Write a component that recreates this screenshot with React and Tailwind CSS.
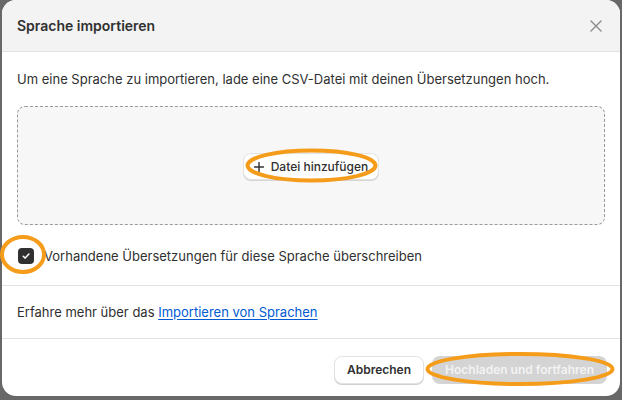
import React from "react";

export default function App() {
  return (
    <div
      className="relative w-[622px] h-[400px] bg-[#686868] overflow-hidden"
      style={{ fontFamily: "Inter, 'Noto Sans', sans-serif" }}
    >
      <div className="ml-[2px] w-[618px] h-[396px] bg-white rounded-[14px] overflow-hidden flex flex-col text-[#303030]">
        {/* Header */}
        <div className="h-[52px] shrink-0 bg-[#f3f3f3] border-b border-[#e3e3e3] flex items-center justify-between pl-[15px] pr-[18px]">
          <div className="text-[14px] font-semibold leading-5">Sprache importieren</div>
          <svg width="12" height="12" viewBox="0 0 12 12" className="text-[#8a8a8a]">
            <path d="M1 1L11 11M11 1L1 11" stroke="currentColor" strokeWidth="1.4" strokeLinecap="round" />
          </svg>
        </div>

        {/* Body */}
        <div className="px-[15px] pt-[17px] pb-[19px] border-b border-[#e3e3e3]">
          <p className="text-[13px] leading-5">
            Um eine Sprache zu importieren, lade eine CSV-Datei mit deinen Übersetzungen hoch.
          </p>
          <div className="mt-[17px] h-[119px] rounded-lg border border-dashed border-[#9a9a9a] bg-[#f7f7f7] flex items-center justify-center">
            <button className="mt-[2px] h-[27px] px-[10px] flex items-center gap-[7px] rounded-lg bg-white border border-[#e3e3e3] shadow-[0_1px_0_#d4d4d4] text-[12px] font-medium text-[#303030]">
              <svg width="10" height="10" viewBox="0 0 10 10">
                <path d="M5 0.5V9.5M0.5 5H9.5" stroke="#303030" strokeWidth="1.4" strokeLinecap="round" />
              </svg>
              Datei hinzufügen
            </button>
          </div>
          <div className="mt-[21px] flex items-center gap-[10px] h-5">
            <div className="ml-[1px] w-4 h-4 rounded-[4px] bg-[#303030] flex items-center justify-center">
              <svg width="10" height="10" viewBox="0 0 10 10">
                <path d="M2.2 5.2L4.2 7.1L7.9 3" stroke="white" strokeWidth="1.5" fill="none" strokeLinecap="round" strokeLinejoin="round" />
              </svg>
            </div>
            <span className="text-[13px] leading-5">
              Vorhandene Übersetzungen für diese Sprache überschreiben
            </span>
          </div>
        </div>

        {/* Learn more */}
        <div className="px-[15px] py-4 border-b border-[#e3e3e3] text-[13px] leading-5">
          Erfahre mehr über das{" "}
          <a className="text-[#005bd3] underline underline-offset-2">Importieren von Sprachen</a>
        </div>

        {/* Footer */}
        <div className="flex-1 flex items-start justify-end gap-[8px] pt-[17px] pr-[13px]">
          <button className="h-[28px] px-[12px] rounded-lg bg-white border border-[#e3e3e3] shadow-[0_1px_0_#cfcfcf] text-[12px] font-semibold text-[#303030]">
            Abbrechen
          </button>
          <button className="h-[28px] px-[13px] rounded-lg bg-[#d4d4d4] text-[12px] font-semibold text-[#f3f3f3]">
            Hochladen und fortfahren
          </button>
        </div>
      </div>

      {/* Orange annotation ellipses */}
      <svg className="absolute left-0 top-0 pointer-events-none" width="622" height="400">
        <ellipse cx="311.5" cy="165.5" rx="64" ry="15" fill="none" stroke="#f59c1a" strokeWidth="4" />
        <ellipse cx="23" cy="254.5" rx="21" ry="17.5" fill="none" stroke="#f59c1a" strokeWidth="4" />
        <ellipse cx="520" cy="369" rx="92.5" ry="15" fill="none" stroke="#f59c1a" strokeWidth="4" />
      </svg>
    </div>
  );
}
